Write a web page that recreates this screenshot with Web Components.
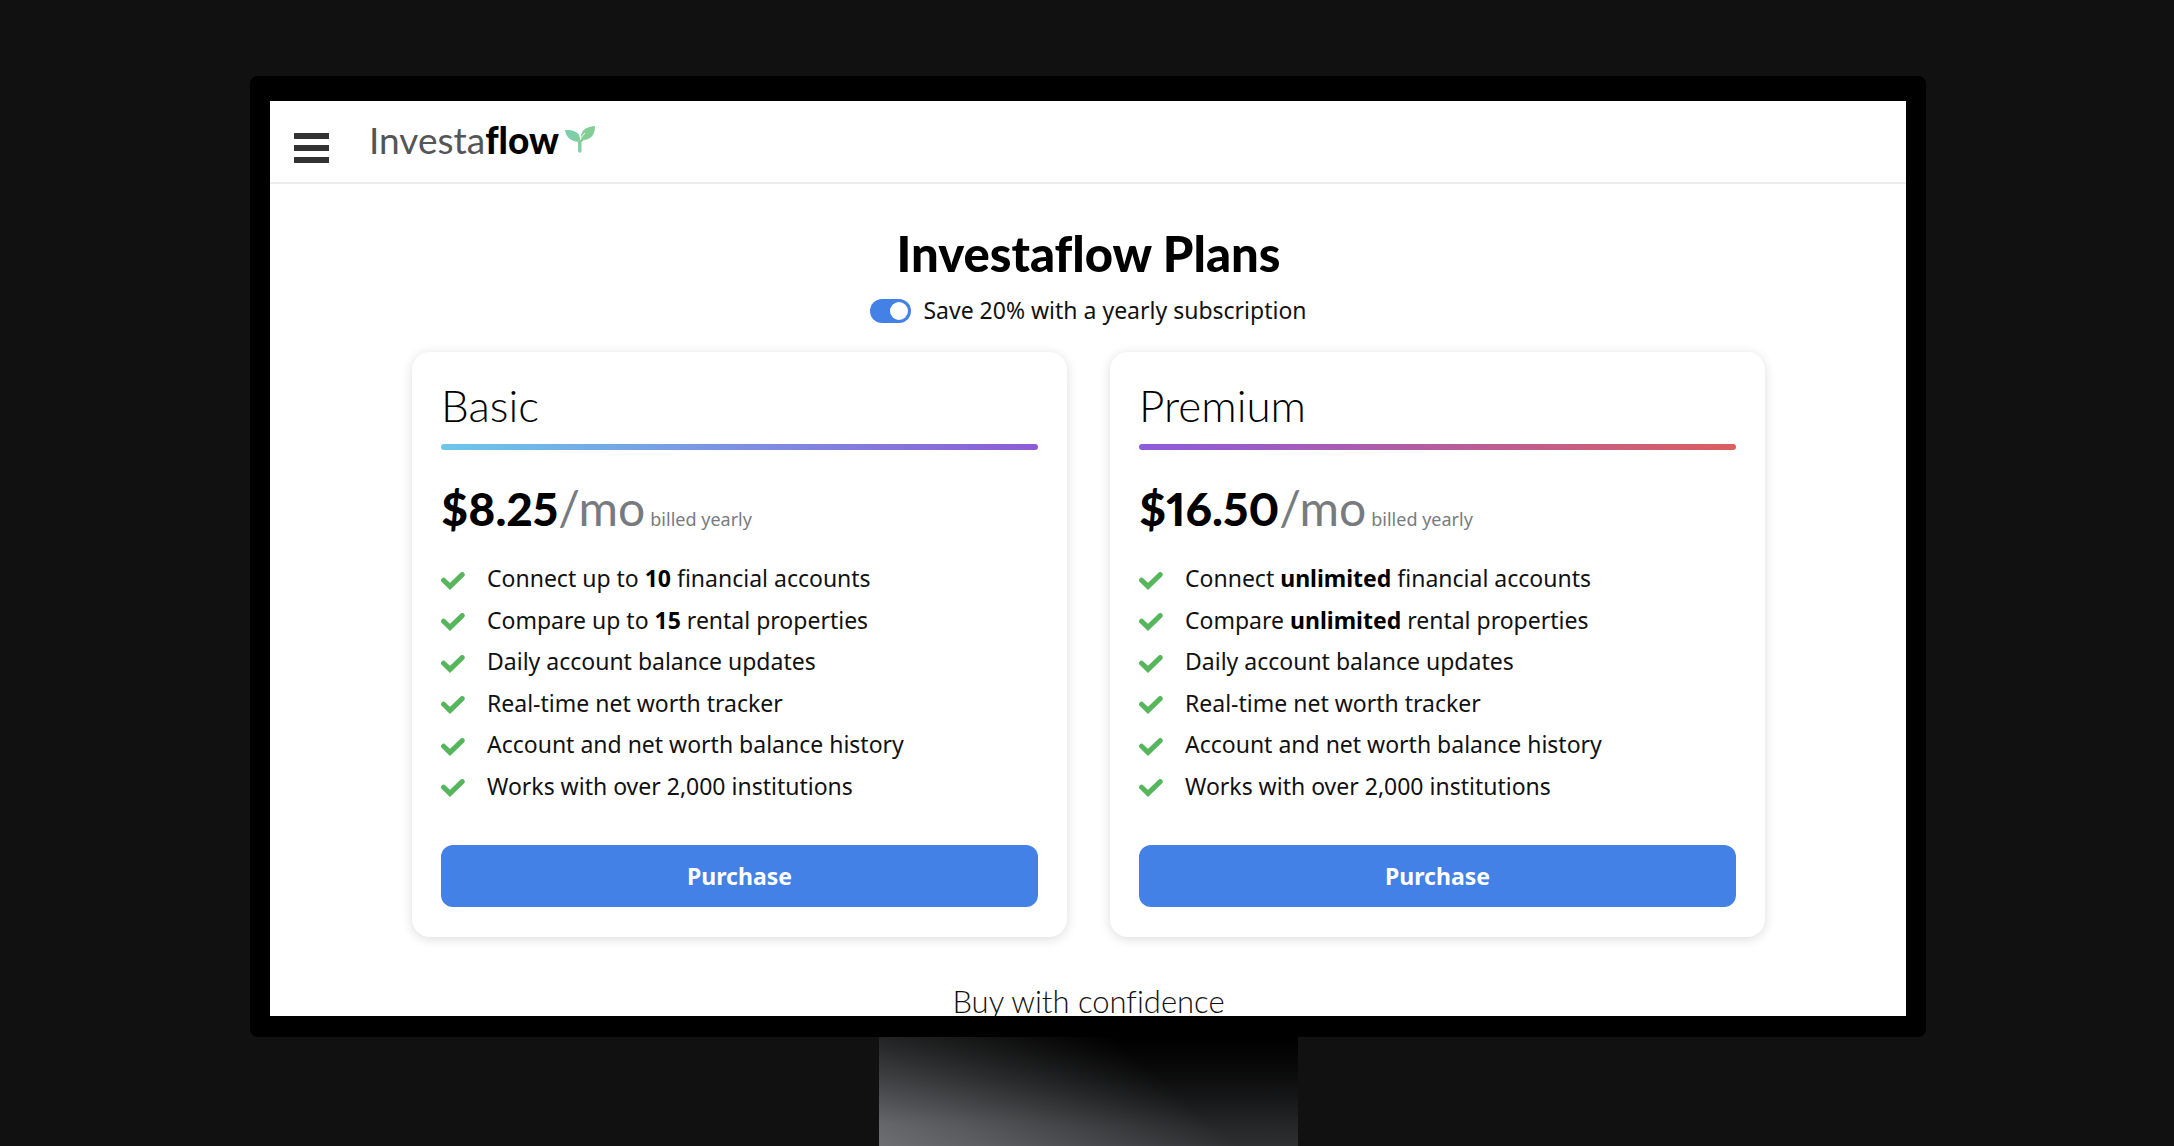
<!DOCTYPE html>
<html lang="en">
<head>
<meta charset="utf-8">
<meta name="viewport" content="width=device-width, initial-scale=1">
<title>Investaflow Plans</title>
<style>
  html, body { margin: 0; }
  body {
    --display: Lato, "Open Sans", sans-serif;
    --blue: #4381e6;
    background: #111;
    color: #000;
    font: 23px/33px "Noto Sans", "Open Sans", sans-serif;
    font-variant-ligatures: none;
    overflow: hidden;
  }
</style>
</head>
<body>
<monitor-frame>
  <site-header></site-header>
  <plans-page>
    <plan-card name="Basic" price="$8.25" from="#6bc7ea" to="#8d5bd5">
      <plan-feature>Connect up to <b>10</b> financial accounts</plan-feature>
      <plan-feature>Compare up to <b>15</b> rental properties</plan-feature>
      <plan-feature>Daily account balance updates</plan-feature>
      <plan-feature>Real-time net worth tracker</plan-feature>
      <plan-feature>Account and net worth balance history</plan-feature>
      <plan-feature>Works with over 2,000 institutions</plan-feature>
    </plan-card>
    <plan-card name="Premium" price="$16.50" from="#8d5bdc" to="#dc5f60">
      <plan-feature>Connect <b>unlimited</b> financial accounts</plan-feature>
      <plan-feature>Compare <b>unlimited</b> rental properties</plan-feature>
      <plan-feature>Daily account balance updates</plan-feature>
      <plan-feature>Real-time net worth tracker</plan-feature>
      <plan-feature>Account and net worth balance history</plan-feature>
      <plan-feature>Works with over 2,000 institutions</plan-feature>
    </plan-card>
  </plans-page>
</monitor-frame>

<script>
class BaseElement extends HTMLElement {
  connectedCallback() {
    if (!this.shadowRoot) this.attachShadow({ mode: "open" }).innerHTML = this.render();
  }
}

customElements.define("monitor-frame", class extends BaseElement {
  render() {
    return `<style>
      :host { display: flex; flex-direction: column; align-items: center; box-sizing: border-box;
        height: 100vh; padding: 76px 248px 0 250px; }
      .bezel { box-sizing: border-box; width: 100%; height: calc(100vh - 185px);
        padding: 25px 20px 21px; background: #000; border-radius: 8px; }
      .screen { height: 100%; overflow: hidden; background: #fff; }
      .stand { flex: 1; width: 25%;
        background:
          linear-gradient(to bottom, rgba(0,0,0,.45) 0, transparent 80%),
          linear-gradient(221deg, transparent 34%, rgba(136,139,142,.3) 62%, rgba(136,138,142,.5) 80%, rgba(136,137,142,.7) 100%),
          linear-gradient(to bottom, #000 0, #2e2f31 100%); }
    </style>
    <div class="bezel"><div class="screen"><slot></slot></div></div>
    <div class="stand"></div>`;
  }
});

customElements.define("brand-logo", class extends BaseElement {
  render() {
    return `<style>
      :host { display: block; padding-bottom: 4px; }
      a { display: flex; align-items: center; gap: 6px; color: #555; text-decoration: none;
        font: 400 37px/44px var(--display); font-variant-ligatures: none; }
      b { color: #000; font-weight: 900; }
      svg { display: block; width: 30px; height: 27px; }
    </style>
    <a href="#"><span>Investa<b>flow</b></span>
      <svg viewBox="0 0 30 27" aria-hidden="true">
        <defs><linearGradient id="s" x1="0" y1="1" x2="1" y2="0">
          <stop offset="0" stop-color="#76cdc0"/><stop offset="1" stop-color="#86cf8c"/></linearGradient></defs>
        <path fill="#7fceaa" d="M0 4C6 3.500 12 5 14 9C15 11.500 15 14 15.500 15.500C7 16.500 1 12 0 4Z"/>
        <path fill="#84cd96" d="M30 0C30 9 26 14 16.500 14.500C15.500 13.500 15.500 10 16.500 7.500C18.500 2.500 24 .5 30 0Z"/>
        <path fill="none" stroke="#fff" stroke-width="1" d="M14 17C15 13 17 10 20 7"/>
        <path fill="none" stroke="url(#s)" stroke-width="3.400" stroke-linecap="round" d="M7 9C12 11 14.600 14 14.800 18V25"/>
        <path fill="none" stroke="#84cd96" stroke-width="2" stroke-linecap="round" d="M16.500 15C18 12 20 9.500 23 7"/>
      </svg></a>`;
  }
});

customElements.define("site-header", class extends BaseElement {
  render() {
    return `<style>
      :host { display: flex; align-items: center; gap: 40px; height: 81px; padding: 0 24px;
        border-bottom: 2px solid #ebebeb; }
      button { display: flex; flex-direction: column; gap: 6px; width: 35px; padding: 12px 0 0;
        border: 0; background: none; }
      i { display: block; width: 100%; height: 6px; background: #333; }
    </style>
    <button type="button" aria-label="Menu"><i></i><i></i><i></i></button>
    <brand-logo></brand-logo>`;
  }
});

customElements.define("yearly-toggle", class extends BaseElement {
  render() {
    return `<style>
      :host { display: flex; justify-content: center; }
      label { display: flex; align-items: center; gap: 12px; color: #111; }
      input { appearance: none; box-sizing: border-box; width: 41px; height: 24px; margin: 0; padding: 3px;
        border-radius: 12px; background: #bbb; display: flex; }
      input::before { content: ""; width: 18px; height: 18px; border-radius: 50%; background: #fff; }
      input:checked { background: var(--blue); justify-content: flex-end; }
    </style>
    <label><input type="checkbox" role="switch" checked><span>Save 20% with a yearly subscription</span></label>`;
  }
});

customElements.define("plan-feature", class extends BaseElement {
  render() {
    this.setAttribute("role", "listitem");
    return `<style>
      :host { display: flex; align-items: center; gap: 22px; color: #111; }
      svg { display: block; width: 24px; height: 18px; margin-top: 4px; }
      ::slotted(b) { color: #000; }
    </style>
    <svg viewBox="0 0 24 18" aria-hidden="true"><path fill="none" stroke="#55b65c" stroke-width="5" stroke-linecap="round" d="M2.600 8.200L9 14.400L21.200 2.600"/></svg>
    <span><slot></slot></span>`;
  }
});

customElements.define("plan-card", class extends BaseElement {
  render() {
    const a = n => this.getAttribute(n);
    return `<style>
      :host { display: flex; flex-direction: column; flex: 1; padding: 28px 29px 30px; background: #fff;
        border-radius: 18px; box-shadow: 0 2px 12px rgba(0,0,0,.14); }
      h2 { margin: 0; font: 300 44px/50px var(--display); font-variant-ligatures: none; }
      .bar { height: 6px; margin-top: 14px; border-radius: 3px;
        background: linear-gradient(to right, ${a("from")}, ${a("to")}); }
      p { margin: 29px 0 0; color: #777b80; font: 400 48px/58px var(--display); }
      p b { color: #000; font-size: 46px; font-weight: 900; font-variant-numeric: proportional-nums; }
      small { font: 18px/18px "Noto Sans", "Open Sans", sans-serif; margin-left: 5px; }
      .list { display: grid; grid-auto-rows: 1fr; height: 249px; margin-top: 20px; }
      button { height: 62px; margin-top: 38px; border: 0; border-radius: 12px; background: var(--blue);
        color: #fff; font: 700 23px/33px "Noto Sans", "Open Sans", sans-serif; }
    </style>
    <h2>${a("name")}</h2>
    <div class="bar"></div>
    <p><b>${a("price")}</b>/mo<small>billed yearly</small></p>
    <div class="list" role="list"><slot></slot></div>
    <button type="button">Purchase</button>`;
  }
});

customElements.define("plans-page", class extends BaseElement {
  render() {
    return `<style>
      :host { display: block; padding: 40px 141px 0 142px; text-align: center; }
      h1 { margin: 0; font: 900 49px/58px var(--display); font-variant-ligatures: none; }
      yearly-toggle { margin-top: 12px; }
      .cards { display: flex; gap: 43px; margin-top: 25px; text-align: left; }
      h3 { margin: 46px 0 0; font: 300 31px/36px var(--display); font-variant-ligatures: none; color: #111; }
    </style>
    <h1>Investaflow Plans</h1>
    <yearly-toggle></yearly-toggle>
    <div class="cards"><slot></slot></div>
    <h3>Buy with confidence</h3>`;
  }
});
</script>
</body>
</html>
